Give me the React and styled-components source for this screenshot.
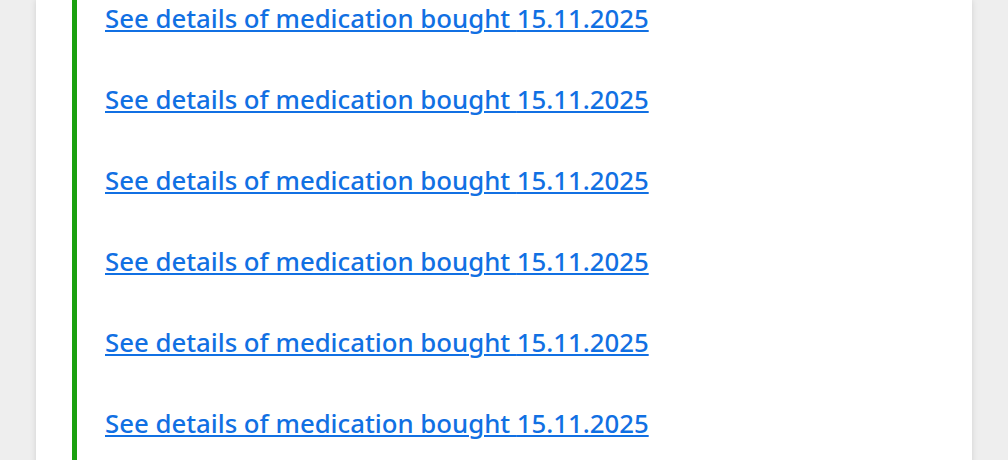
import styled, { createGlobalStyle } from "styled-components";

const GlobalStyle = createGlobalStyle`
  html, body {
    margin: 0;
    padding: 0;
    background: #eeeeee;
    height: 100%;
    overflow: hidden;
  }
`;

const Page = styled.div`
  padding: 0 36px;
  height: 460px;
  overflow: hidden;
`;

const Card = styled.div`
  background: #ffffff;
  box-shadow: 0 0 6px rgba(0, 0, 0, 0.12);
  padding: 0 36px;
  min-height: 100%;
`;

const Timeline = styled.div`
  border-left: 5px solid #1aa10f;
  padding-left: 28px;
  display: flex;
  flex-direction: column;
  gap: 45px;
  padding-bottom: 40px;
`;

const DetailLink = styled.a`
  font-family: "Noto Sans", "Open Sans", sans-serif;
  font-size: 25.75px;
  font-weight: 500;
  line-height: 36px;
  color: #1170e3;
  text-decoration: underline;
  text-decoration-thickness: 2px;
  text-underline-offset: 2px;
  align-self: flex-start;
`;

const items = Array.from({ length: 6 }, () => "15.11.2025");

function App() {
  return (
    <>
      <GlobalStyle />
      <Page>
        <Card>
          <Timeline>
            {items.map((date, i) => (
              <DetailLink key={i} href="#">
                See details of medication bought {date}
              </DetailLink>
            ))}
          </Timeline>
        </Card>
      </Page>
    </>
  );
}

export default App;
